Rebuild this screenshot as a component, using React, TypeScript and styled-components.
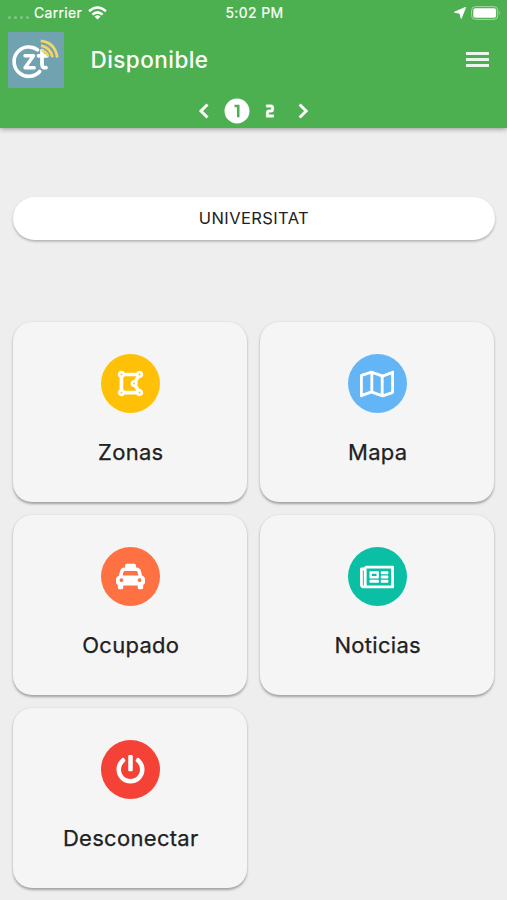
import React from "react";
import styled, { createGlobalStyle } from "styled-components";
import { FaDrawPolygon, FaRegMap, FaTaxi, FaRegNewspaper, FaPowerOff } from "react-icons/fa";

const GlobalStyle = createGlobalStyle`
  * { box-sizing: border-box; }
  body {
    margin: 0;
    background: #eeeeee;
    color: #212121;
    font-family: Inter, "Liberation Sans", sans-serif;
  }
  svg { display: block; flex: none; }
`;

const Screen = styled.div`
  width: 507px;
  height: 900px;
  overflow: hidden;
  display: flex;
  flex-direction: column;
  background: #eeeeee;
`;

const Header = styled.header`
  height: 128px;
  flex: none;
  color: #fff;
  background: #4caf50;
  box-shadow: 0 1px 5px rgba(0, 0, 0, 0.38);
`;

const StatusBar = styled.div`
  height: 26px;
  padding: 0 6px 0 8px;
  display: grid;
  grid-template-columns: 1fr auto 1fr;
  align-items: center;
  font-size: 14px;
  line-height: 26px;
`;

const StatusGroup = styled.div<{ $end?: boolean }>`
  display: flex;
  align-items: center;
  justify-content: ${(p) => (p.$end ? "flex-end" : "flex-start")};
  gap: ${(p) => (p.$end ? "5px" : "6px")};
`;

const SignalDots = styled.div`
  display: flex;
  gap: 3px;
  margin: 8px -1px 0 0;
`;

const Dot = styled.i`
  width: 3px;
  height: 3px;
  border-radius: 50%;
  background: rgba(255, 255, 255, 0.3);
`;

const Carrier = styled.span`
  letter-spacing: 0.3px;
  -webkit-text-stroke: 0.2px currentColor;
`;

const Clock = styled.span`
  letter-spacing: 0.4px;
  -webkit-text-stroke: 0.2px currentColor;
`;

const TitleBar = styled.div`
  height: 68px;
  padding: 0 18px 0 8px;
  display: flex;
  align-items: center;
`;

const Title = styled.h1`
  flex: 1;
  margin: 0 0 0 26.5px;
  font-size: 22.5px;
  font-weight: 500;
  line-height: 30px;
  letter-spacing: 0.45px;
`;

const MenuButton = styled.button`
  display: flex;
  flex-direction: column;
  gap: 3px;
  margin-top: -1px;
  padding: 0;
  border: 0;
  background: none;
`;

const MenuBar = styled.span`
  width: 23px;
  height: 3px;
  background: #e9f6e9;
`;

const Pager = styled.nav`
  height: 34px;
  display: flex;
  justify-content: center;
  align-items: center;
  gap: 3px;
`;

const Main = styled.main`
  padding: 69px 13px 0 13px;
`;

const ZoneBar = styled.div`
  height: 43px;
  margin-right: -1px;
  border-radius: 22px;
  background: #fff;
  box-shadow: 0 1.5px 2.5px rgba(0, 0, 0, 0.27);
  text-align: center;
  font-size: 16.5px;
  line-height: 43px;
  letter-spacing: 0.4px;
`;

const CardGrid = styled.div`
  margin-top: 82px;
  display: grid;
  grid-template-columns: 1fr 1fr;
  grid-auto-rows: 180px;
  gap: 13px;
`;

const Card = styled.button`
  display: flex;
  flex-direction: column;
  align-items: center;
  padding: 32px 0 0;
  border: 0;
  border-radius: 19px;
  background: #f5f5f5;
  box-shadow: 0 1.2px 2.5px rgba(0, 0, 0, 0.32);
  font-family: inherit;
  color: inherit;
`;

const IconDisc = styled.span<{ $color: string }>`
  width: 59px;
  height: 59px;
  border-radius: 50%;
  display: flex;
  align-items: center;
  justify-content: center;
  background: ${(p) => p.$color};
  color: #fff;
`;

const CardLabel = styled.span`
  margin: 24px 0 0 1.5px;
  font-size: 22px;
  line-height: 30px;
  -webkit-text-stroke: 0.25px currentColor;
  letter-spacing: 0.3px;
`;

const Logo = () => (
  <svg width="56" height="56" viewBox="0 0 56 56" fill="none">
    <rect width="56" height="56" fill="#71a2b0" />
    <path d="M29.6 17.9A14.7 14.7 0 1 0 31.7 39.5" stroke="#fff" strokeWidth="3.6" strokeLinecap="round" />
    <path d="M17 23.8H25.6L17 35.7H26.2" stroke="#fff" strokeWidth="3.4" strokeLinecap="round" strokeLinejoin="round" />
    <path d="M34 18.5V32.5Q34 36.3 38 35.6M30.5 23.8H39" stroke="#fff" strokeWidth="3.7" strokeLinecap="round" />
    <path d="M32.7 8.9Q47.3 10.5 49.2 25.7M33 13.7Q42.4 15.3 44.6 25.2M33.6 18.1Q38.6 19.8 40.2 24.3" stroke="#f2d568" strokeWidth="2.8" />
  </svg>
);

const Wifi = () => (
  <svg width="19" height="14" viewBox="0 0 19 14" fill="none" stroke="#fff" strokeWidth="2.5">
    <path d="M1.1 5.2Q9.5-2.1 17.9 5.2M4.4 8.6Q9.5 4.1 14.6 8.6" />
    <path d="M6.5 10.6Q9.5 8 12.5 10.6L9.5 13.6Z" fill="#fff" stroke="none" />
  </svg>
);

const LocationArrow = () => (
  <svg width="12" height="12" viewBox="0 0 12 12">
    <path d="M11.4.6L7.2 11.2L6 6.2L.6 5.3Z" fill="#fff" stroke="#fff" strokeWidth="1.1" strokeLinejoin="round" />
  </svg>
);

const Battery = () => (
  <svg width="30" height="14" viewBox="0 0 30 14">
    <rect x="0.6" y="0.6" width="26.2" height="12.8" rx="3.8" fill="none" stroke="#a5d7a7" strokeWidth="1" />
    <rect x="2.3" y="2.3" width="22.8" height="9.4" rx="2" fill="#fff" />
    <path d="M28 5Q29.8 7 28 9Z" fill="#a5d7a7" />
  </svg>
);

const Chevron = ({ next }: { next?: boolean }) => (
  <svg width="30" height="30" viewBox="0 0 24 24" fill="none" stroke="#fff" strokeWidth="2.4">
    <path d={next ? "M9.3 6.8L14.5 12L9.3 17.2" : "M14.8 6.8L9.6 12L14.8 17.2"} />
  </svg>
);

const PageOne = () => (
  <svg width="30" height="30" viewBox="0 0 24 24" fill="#fff">
    <path fillRule="evenodd" d="M12 2A10 10 0 1 1 12 22A10 10 0 1 1 12 2ZM10 7V9H12V17H14V7Z" />
  </svg>
);

const PageTwo = () => (
  <svg width="30" height="30" viewBox="0 0 24 24" fill="#fff" stroke="#fff" strokeWidth="0.3">
    <path d="M9 7V9H13V11H11A2 2 0 0 0 9 13V17H15V15H11V13H13A2 2 0 0 0 15 11V9A2 2 0 0 0 13 7Z" />
  </svg>
);

const actions = [
  { label: "Zonas", color: "#ffc107", icon: <FaDrawPolygon size={29} /> },
  { label: "Mapa", color: "#64b5f6", icon: <FaRegMap size={34} /> },
  { label: "Ocupado", color: "#ff7043", icon: <FaTaxi size={29} /> },
  { label: "Noticias", color: "#0abfa4", icon: <FaRegNewspaper size={34} /> },
  { label: "Desconectar", color: "#f44336", icon: <FaPowerOff size={29} /> },
];

export default function App() {
  return (
    <>
      <GlobalStyle />
      <Screen>
        <Header>
          <StatusBar>
            <StatusGroup>
              <SignalDots>
                <Dot /><Dot /><Dot /><Dot />
              </SignalDots>
              <Carrier>Carrier</Carrier>
              <Wifi />
            </StatusGroup>
            <Clock>5:02 PM</Clock>
            <StatusGroup $end>
              <LocationArrow />
              <Battery />
            </StatusGroup>
          </StatusBar>
          <TitleBar>
            <Logo />
            <Title>Disponible</Title>
            <MenuButton aria-label="Menú">
              <MenuBar /><MenuBar /><MenuBar />
            </MenuButton>
          </TitleBar>
          <Pager>
            <Chevron />
            <PageOne />
            <PageTwo />
            <Chevron next />
          </Pager>
        </Header>
        <Main>
          <ZoneBar>UNIVERSITAT</ZoneBar>
          <CardGrid>
            {actions.map((a) => (
              <Card key={a.label}>
                <IconDisc $color={a.color}>{a.icon}</IconDisc>
                <CardLabel>{a.label}</CardLabel>
              </Card>
            ))}
          </CardGrid>
        </Main>
      </Screen>
    </>
  );
}
